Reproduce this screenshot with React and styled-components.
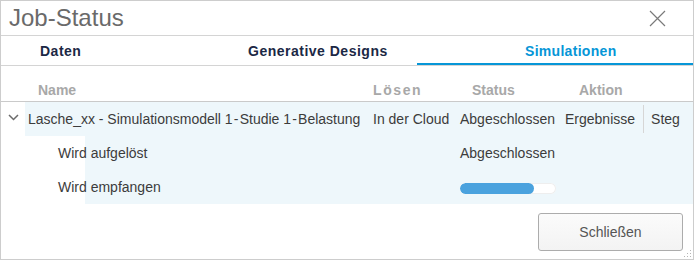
import React from 'react';
import styled, { createGlobalStyle } from 'styled-components';

const GlobalStyle = createGlobalStyle`
  html, body {
    margin: 0;
    padding: 0;
    background: #fff;
  }
  * {
    box-sizing: border-box;
  }
`;

const COLUMNS = '24px 348px 87px 105px 1fr';

const Dialog = styled.div`
  position: relative;
  display: flex;
  flex-direction: column;
  width: 694px;
  height: 260px;
  border: 1px solid #cdcdcd;
  background: #fff;
  font-family: "Liberation Sans", Arial, sans-serif;
  color: #3c3c3c;
`;

const Header = styled.div`
  display: flex;
  align-items: center;
  justify-content: space-between;
  height: 35px;
  padding: 0 27px 0 8px;
  border-bottom: 1px solid #d4d4d4;
`;

const Title = styled.h1`
  margin: 0;
  font-size: 24px;
  font-weight: normal;
  color: #6a6a6a;
  line-height: 28px;
`;

const CloseButton = styled.button`
  display: flex;
  padding: 0;
  border: 0;
  background: none;
  cursor: pointer;
`;

const Tabs = styled.div`
  display: grid;
  grid-template-columns: 207px 209px 1fr;
  height: 30px;
  border-bottom: 1px solid #d4d4d4;
`;

const Tab = styled.div`
  display: flex;
  align-items: center;
  padding-left: ${p => p.$indent}px;
  font-size: 14px;
  font-weight: bold;
  letter-spacing: ${p => (p.$active ? '0.3px' : '0.5px')};
  color: ${p => (p.$active ? '#0696d7' : '#1b2845')};
  box-shadow: ${p => (p.$active ? 'inset 0 -2px 0 #0696d7' : 'none')};
`;

const HeadRow = styled.div`
  display: grid;
  grid-template-columns: ${COLUMNS};
  align-items: end;
  height: 36px;
  padding-bottom: 3px;
  border-bottom: 1px solid #cacaca;
`;

const HeadCell = styled.div`
  padding-left: ${p => p.$indent || 0}px;
  font-size: 14px;
  font-weight: bold;
  line-height: 16px;
  color: #a8a8a8;
  letter-spacing: ${p => (p.$spaced ? '1.6px' : '0')};
`;

const Row = styled.div`
  display: grid;
  grid-template-columns: ${COLUMNS};
  align-items: center;
  height: 34px;
  font-size: 14px;
  white-space: nowrap;
  background: linear-gradient(to right, transparent ${p => p.$inset}px, #eef7fb ${p => p.$inset}px);
`;

const Cell = styled.div`
  display: flex;
  align-items: center;
  padding-left: ${p => p.$indent || 0}px;
`;

const Toggle = styled.span`
  display: flex;
  padding-left: 7px;
  padding-bottom: 4px;
`;

const Action = styled.span`
  color: #3c3c3c;
  cursor: pointer;
  & + & {
    margin-left: 8px;
    padding: 6px 0 6px 7px;
    border-left: 1px solid #d6d6d6;
  }
`;

const Progress = styled.div`
  width: 96px;
  height: 11px;
  margin-top: 2px;
  border-radius: 6px;
  background: #fff;
  box-shadow: inset 0 0 0 1px #eeeeee;
  overflow: hidden;
`;

const ProgressFill = styled.div`
  height: 100%;
  border-radius: 6px;
  background: #4aa2de;
`;

const Footer = styled.div`
  display: flex;
  justify-content: flex-end;
  padding: 9px 10px 0 0;
`;

const Button = styled.button`
  width: 145px;
  height: 38px;
  border: 1px solid #acacac;
  border-radius: 3px;
  background: linear-gradient(#fbfbfb, #f3f3f3);
  font-family: "Liberation Sans", Arial, sans-serif;
  font-size: 14px;
  color: #555;
  cursor: pointer;
`;

const Grip = styled.svg`
  position: absolute;
  right: 1px;
  bottom: 1px;
`;

const Chevron = () => (
  <svg width="11" height="7" viewBox="0 0 11 7">
    <path d="M1 1 L5.5 5.5 L10 1" fill="none" stroke="#6b6b6b" strokeWidth="1.5" />
  </svg>
);

const CloseIcon = () => (
  <svg width="17" height="17" viewBox="0 0 17 17">
    <path d="M1 1 L16 16 M16 1 L1 16" stroke="#7a7a7a" strokeWidth="1.2" />
  </svg>
);

const tasks = [
  { name: 'Wird aufgelöst', status: 'Abgeschlossen' },
  { name: 'Wird empfangen', progress: 77 },
];

const App = () => (
  <>
    <GlobalStyle />
    <Dialog>
      <Header>
        <Title>Job-Status</Title>
        <CloseButton aria-label="Schließen">
          <CloseIcon />
        </CloseButton>
      </Header>
      <Tabs>
        <Tab $indent={39}>Daten</Tab>
        <Tab $indent={40}>Generative Designs</Tab>
        <Tab $indent={108} $active>Simulationen</Tab>
      </Tabs>
      <HeadRow>
        <span />
        <HeadCell $indent={13}>Name</HeadCell>
        <HeadCell $spaced>Lösen</HeadCell>
        <HeadCell $indent={12}>Status</HeadCell>
        <HeadCell $indent={14}>Aktion</HeadCell>
      </HeadRow>
      <Row $inset={24}>
        <Toggle><Chevron /></Toggle>
        <Cell $indent={3}>Lasche_xx - Simulationsmodell 1{'\u200A'}-{'\u200A'}Studie 1{'\u200A'}-{'\u200A'}Belastung</Cell>
        <Cell>In der Cloud</Cell>
        <Cell>Abgeschlossen</Cell>
        <Cell>
          <Action>Ergebnisse</Action>
          <Action>Steg</Action>
        </Cell>
      </Row>
      {tasks.map(task => (
        <Row key={task.name} $inset={84}>
          <span />
          <Cell $indent={33}>{task.name}</Cell>
          <span />
          <Cell>
            {task.status || (
              <Progress>
                <ProgressFill style={{ width: `${task.progress}%` }} />
              </Progress>
            )}
          </Cell>
          <span />
        </Row>
      ))}
      <Footer>
        <Button>Schließen</Button>
      </Footer>
      <Grip width="8" height="8" viewBox="0 0 8 8">
        <rect x="6" y="0" width="1" height="1" fill="#b5b5b5" />
        <rect x="3" y="3" width="1" height="1" fill="#b5b5b5" />
        <rect x="6" y="3" width="1" height="1" fill="#b5b5b5" />
        <rect x="0" y="6" width="1" height="1" fill="#b5b5b5" />
        <rect x="3" y="6" width="1" height="1" fill="#b5b5b5" />
        <rect x="6" y="6" width="1" height="1" fill="#b5b5b5" />
      </Grip>
    </Dialog>
  </>
);

export default App;
